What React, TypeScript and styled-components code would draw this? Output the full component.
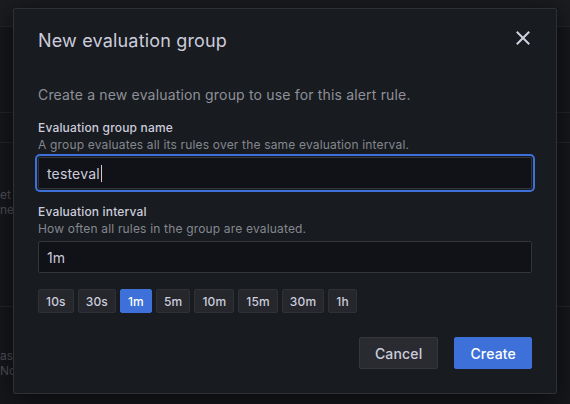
import styled, { createGlobalStyle } from "styled-components";

const GlobalStyle = createGlobalStyle`
  * { box-sizing: border-box; }
  html, body {
    margin: 0;
    padding: 0;
    background: #16171b;
    font-family: Inter, "Noto Sans", sans-serif;
    letter-spacing: 0.01071em;
    color: #ccccdc;
  }
  button { letter-spacing: inherit; }
`;

const Page = styled.div`
  width: 570px;
  height: 404px;
  position: relative;
  overflow: hidden;
  background: #16171b;
`;

const TopBar = styled.div`
  height: 27px;
  background: #1b1c20;
  border-bottom: 1px solid #24252a;
`;

const BackRow = styled.div<{ $h: number; $line?: boolean; $pad: number }>`
  height: ${(p) => p.$h}px;
  border-bottom: ${(p) => (p.$line ? "1px solid #24252a" : "none")};
  padding-top: ${(p) => p.$pad}px;
`;

const BackText = styled.div`
  width: 13px;
  font-size: 12px;
  line-height: 15px;
  color: #4e5057;
  letter-spacing: 0;
  white-space: nowrap;
`;

const Overlay = styled.div`
  position: absolute;
  inset: 0;
  display: flex;
  align-items: flex-start;
  padding: 8px 0 0 13px;
`;

const Dialog = styled.div`
  width: 544px;
  background: #181b1f;
  border: 1px solid #2f3035;
  border-radius: 2px;
  box-shadow: 0 4px 24px rgba(0, 0, 0, 0.6);
`;

const Header = styled.div`
  height: 64px;
  display: flex;
  align-items: center;
  justify-content: space-between;
  padding: 0 24px;
`;

const Title = styled.h2`
  margin: 0;
  font-size: 18px;
  font-weight: 400;
  line-height: 22px;
  color: #ccccdc;
`;

const CloseButton = styled.button`
  width: 20px;
  height: 20px;
  padding: 0;
  margin-top: -6px;
  margin-right: -1px;
  background: none;
  border: none;
  display: flex;
  align-items: center;
  justify-content: center;
  color: #d1d1de;
`;

const Body = styled.div`
  padding: 12px 24px 24px;
`;

const Intro = styled.p`
  margin: 0 0 14px;
  font-size: 14px;
  line-height: 20px;
  color: #8e9099;
`;

const Field = styled.div`
  margin-bottom: 14px;
`;

const Label = styled.div`
  font-size: 12px;
  font-weight: 500;
  line-height: 17px;
  color: #ccccdc;
`;

const Hint = styled.div`
  font-size: 12px;
  line-height: 18px;
  color: #85878f;
  margin-bottom: 3px;
`;

const InputBox = styled.div<{ $focused?: boolean }>`
  height: 32px;
  display: flex;
  align-items: center;
  padding: 0 8px;
  background: #111217;
  border: 1px solid #34353b;
  border-radius: 2px;
  font-size: 14px;
  color: #ccccdc;
  box-shadow: ${(p) =>
    p.$focused ? "0 0 0 1px #181b1f, 0 0 0 3px #3d71d9" : "none"};
`;

const Caret = styled.span`
  display: inline-block;
  width: 1px;
  height: 17px;
  background: #ccccdc;
  margin-left: 1px;
`;

const Presets = styled.div`
  display: flex;
  gap: 4px;
  margin-top: 16px;
`;

const Preset = styled.button<{ $active?: boolean }>`
  height: 24px;
  padding: 0 7px;
  font-family: inherit;
  font-size: 12px;
  font-weight: 500;
  border-radius: 2px;
  border: 1px solid ${(p) => (p.$active ? "#3d71d9" : "#2f3137")};
  background: ${(p) => (p.$active ? "#3d71d9" : "#25272c")};
  color: ${(p) => (p.$active ? "#ffffff" : "#ccccdc")};
`;

const Footer = styled.div`
  display: flex;
  justify-content: flex-end;
  gap: 16px;
  margin-top: 24px;
`;

const Button = styled.button<{ $primary?: boolean }>`
  height: 32px;
  padding: 0 15px;
  font-family: inherit;
  font-size: 14px;
  font-weight: 500;
  border-radius: 2px;
  border: 1px solid ${(p) => (p.$primary ? "#3d71d9" : "#36373d")};
  background: ${(p) => (p.$primary ? "#3d71d9" : "#2a2b30")};
  color: ${(p) => (p.$primary ? "#ffffff" : "#ccccdc")};
`;

const presets = ["10s", "30s", "1m", "5m", "10m", "15m", "30m", "1h"];

const CloseIcon = () => (
  <svg width="16" height="16" viewBox="0 0 16 16" fill="none">
    <path
      d="M2.5 2.5L13.5 13.5M13.5 2.5L2.5 13.5"
      stroke="currentColor"
      strokeWidth="2"
      strokeLinecap="square"
    />
  </svg>
);

export default function App() {
  return (
    <Page>
      <GlobalStyle />
      <TopBar />
      <BackRow $h={86} $pad={0} $line />
      <BackRow $h={30} $pad={0} $line />
      <BackRow $h={164} $pad={44} $line>
        <BackText>et</BackText>
        <BackText>ne</BackText>
      </BackRow>
      <BackRow $h={60} $pad={41}>
        <BackText>as</BackText>
        <BackText>No</BackText>
      </BackRow>

      <Overlay>
        <Dialog>
          <Header>
            <Title>New evaluation group</Title>
            <CloseButton aria-label="Close">
              <CloseIcon />
            </CloseButton>
          </Header>
          <Body>
            <Intro>
              Create a new evaluation group to use for this alert rule.
            </Intro>
            <Field>
              <Label>Evaluation group name</Label>
              <Hint>
                A group evaluates all its rules over the same evaluation
                interval.
              </Hint>
              <InputBox $focused>
                testeval
                <Caret />
              </InputBox>
            </Field>
            <Field>
              <Label>Evaluation interval</Label>
              <Hint>How often all rules in the group are evaluated.</Hint>
              <InputBox>1m</InputBox>
            </Field>
            <Presets>
              {presets.map((p) => (
                <Preset key={p} $active={p === "1m"}>
                  {p}
                </Preset>
              ))}
            </Presets>
            <Footer>
              <Button>Cancel</Button>
              <Button $primary>Create</Button>
            </Footer>
          </Body>
        </Dialog>
      </Overlay>
    </Page>
  );
}
